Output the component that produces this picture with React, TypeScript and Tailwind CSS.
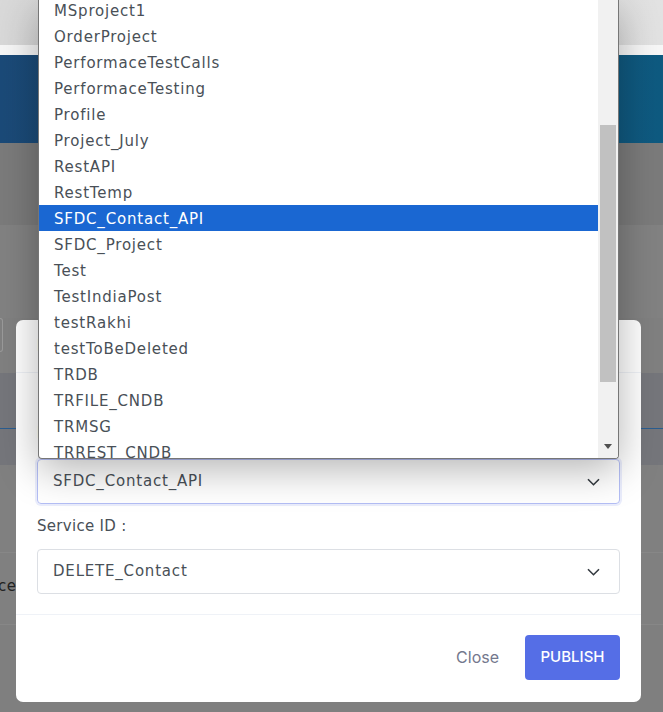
import React from "react";

const projects = [
  "MSproject1",
  "OrderProject",
  "PerformaceTestCalls",
  "PerformaceTesting",
  "Profile",
  "Project_July",
  "RestAPI",
  "RestTemp",
  "SFDC_Contact_API",
  "SFDC_Project",
  "Test",
  "TestIndiaPost",
  "testRakhi",
  "testToBeDeleted",
  "TRDB",
  "TRFILE_CNDB",
  "TRMSG",
  "TRREST_CNDB",
];

const selected = "SFDC_Contact_API";

const Chevron = () => (
  <svg width="13" height="8" viewBox="0 0 13 8" fill="none">
    <path d="M1 1.2l5.5 5.5 5.5-5.5" stroke="#343a40" strokeWidth="1.6" />
  </svg>
);

const App: React.FC = () => {
  return (
    <div
      className="relative w-[663px] h-[712px] overflow-hidden bg-[#7f7f7f]"
      style={{ fontFamily: '"DejaVu Sans", "Open Sans", sans-serif' }}
    >
      {/* dimmed page behind the modal */}
      <div className="flex flex-col">
        <div className="h-[45px] bg-gradient-to-r from-[#d9d9d9] to-[#e2e2e2]" />
        <div className="h-[10px] bg-[#f7f7f7]" />
        <div className="h-[88px] bg-gradient-to-r from-[#1b4a78] to-[#0e5a80]" />
        <div className="h-[82px] bg-[#7b7b7b]" />
        <div className="h-[93px] bg-[#828282]" />
        <div className="h-[55px] bg-[#808080]">
          <div className="w-[3px] h-[34px] border border-l-0 border-[#9a9a9a] rounded-r-[4px]" />
        </div>
        <div className="h-[56px] bg-[#75767b] border-b border-[#2a5d90]" />
        <div className="h-[36px] bg-[#75767b]" />
        <div className="h-[88px] bg-[#808080] border-b border-[#878787]" />
        <div className="h-[72px] bg-[#808080] border-b border-[#878787] flex items-center">
          <span className="text-[15px] text-[#222] -ml-[2px] pb-[4px] tracking-[0.6px]">ce</span>
        </div>
      </div>

      {/* modal */}
      <div className="absolute left-[16px] top-[320px] w-[625px] h-[382px] bg-white rounded-[7px] flex flex-col">
        <div className="h-[53px] px-[21px] border-b border-[#eff2f7] flex items-center justify-between">
          <span className="text-[16px] font-semibold text-[#343a40]">Publish Service</span>
          <span className="text-[20px] text-[#6c757d] pr-[2px]">×</span>
        </div>
        <div className="px-[21px] pt-[49px] pb-[20px] flex flex-col">
          <span className="text-[15px] text-[#495057] leading-[22px] mb-[15px] tracking-[0.3px]">Project ID :</span>
          <div className="h-[45px] border border-[#b4bef5] rounded-[4px] shadow-[0_0_0_2px_rgba(85,110,230,0.12)] flex items-center justify-between pl-[15px] pr-[19px]">
            <span className="text-[15px] text-[#495057] tracking-[0.8px]">SFDC_Contact_API</span>
            <Chevron />
          </div>
          <span className="text-[15px] text-[#495057] leading-[22px] mt-[11px] mb-[12px] tracking-[0.3px]">Service ID :</span>
          <div className="h-[45px] border border-[#dcdfe4] rounded-[4px] flex items-center justify-between pl-[15px] pr-[19px]">
            <span className="text-[15px] text-[#495057] tracking-[0.8px]">DELETE_Contact</span>
            <Chevron />
          </div>
        </div>
        <div className="flex-1 border-t border-[#eff2f7] flex items-start justify-end gap-[26px] pt-[20px] pr-[21px]">
          <span
            className="text-[16px] text-[#74788d] mt-[10px]"
            style={{ fontFamily: "Inter, sans-serif" }}
          >
            Close
          </span>
          <button
            className="h-[45px] w-[95px] rounded-[4px] bg-[#556ee6] text-white text-[15px] font-medium"
            style={{ fontFamily: "Inter, sans-serif" }}
          >
            PUBLISH
          </button>
        </div>
      </div>

      {/* open native select list */}
      <div className="absolute left-[38px] top-0 w-[581px] h-[459px] bg-white border border-t-0 border-[#767676] rounded-b-[4px] overflow-hidden flex shadow-[0_10px_40px_rgba(0,0,0,0.3)]">
        <div className="flex-1 flex flex-col -mt-[3px]">
          {projects.map((p) => (
            <div
              key={p}
              className={
                p === selected
                  ? "h-[26px] shrink-0 leading-[28px] pl-[15px] text-[15px] tracking-[0.8px] bg-[#1a67d2] text-white"
                  : "h-[26px] shrink-0 leading-[28px] pl-[15px] text-[15px] tracking-[0.8px] text-[#495057]"
              }
            >
              {p}
            </div>
          ))}
        </div>
        <div className="w-[20px] bg-[#f1f1f1] flex flex-col items-center pt-[125px]">
          <div className="w-[16px] h-[257px] bg-[#c1c1c1]" />
          <div className="mt-auto mb-[9px] w-0 h-0 border-l-[4px] border-r-[4px] border-t-[5px] border-l-transparent border-r-transparent border-t-[#505050]" />
        </div>
      </div>
    </div>
  );
};

export default App;
